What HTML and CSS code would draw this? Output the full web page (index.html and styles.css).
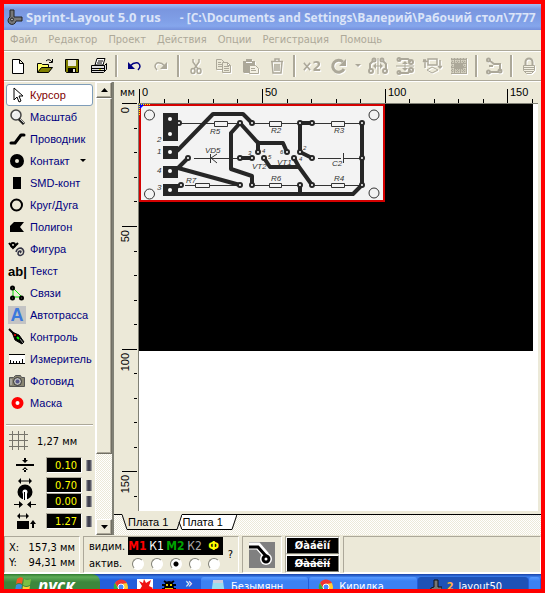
FILE: index.html
```
<!DOCTYPE html>
<html lang="ru">
<head>
    <meta charset="UTF-8">
    <meta name="viewport" content="width=device-width, initial-scale=1.0">
    <title>Sprint-Layout 5.0 rus</title>
    <link rel="stylesheet" href="styles.css">
</head>
<body>
    <header class="titlebar">
        <svg width="16" height="16" viewBox="0 0 16 16"><path d="M3 1h4v7h8v4H9a4 4 0 1 1-6-4z" fill="#777" stroke="#222"/><circle cx="5" cy="10.500" r="1.500" fill="#aaa" stroke="#222"/></svg>
        <h1>Sprint-Layout 5.0 rus</h1>
        <span class="path">- [C:\Documents and Settings\Валерий\Рабочий стол\7777</span>
    </header>
    <nav class="menubar">
        <button>Файл</button>
        <button>Редактор</button>
        <button>Проект</button>
        <button>Действия</button>
        <button>Опции</button>
        <button>Регистрация</button>
        <button>Помощь</button>
    </nav>
    <div class="toolbar">
        <button aria-label="Новый"><svg width="18" height="18" viewBox="0 0 18 18"><path d="M3.500 2.500h7l4 4v10h-11zM10.500 2.500v4h4" fill="#fff" stroke="#000"/></svg></button>
        <button aria-label="Открыть"><svg width="18" height="18" viewBox="0 0 18 18"><path d="M1.500 15.500v-9h4l1 1h6v3" fill="#ffff66" stroke="#000"/><path d="M1.500 15.500l4-5h11l-4 5z" fill="#808000" stroke="#000"/><path d="M10 4q3-3 6 1M16.500 2v3.500H13" fill="none" stroke="#000"/></svg></button>
        <button aria-label="Сохранить"><svg width="18" height="18" viewBox="0 0 18 18"><path d="M2.500 2.500h13v13h-12l-1-1z" fill="#808000" stroke="#000"/><path d="M5 3h8v6H5z" fill="#ece9d8"/><path d="M5 11h8v5H5z" fill="#000"/><path d="M10 12h2v3h-2z" fill="#ece9d8"/></svg></button>
        <button aria-label="Печать"><svg width="18" height="18" viewBox="0 0 18 18"><path d="M5 8l2-6.500h8L13 8z" fill="#fff" stroke="#000"/><path d="M8 4h5M7 6h5" stroke="#000"/><path d="M1.500 8.500h13l2-2v6l-3 3h-12z" fill="#ddd" stroke="#000"/><path d="M2 11.500h12M2 13.500h12M14.500 8.500v6" stroke="#000"/><path d="M9 12.500h2" stroke="#cc0"/></svg></button>
        <span class="sep"></span>
        <button aria-label="Отменить"><svg width="18" height="18" viewBox="0 0 18 18"><path d="M5 9q4-4 8-3 4 3 0 7" fill="none" stroke="#000080" stroke-width="1.500"/><path d="M3 5v7h7z" fill="#000080"/></svg></button>
        <button aria-label="Вернуть" disabled><svg width="18" height="18" viewBox="0 0 18 18"><path d="M13 9Q9 5 5 6q-4 3 0 7" fill="none" stroke="#aca899" stroke-width="1.500"/><path d="M15 5v7H8z" fill="#aca899"/></svg></button>
        <span class="sep"></span>
        <button aria-label="Вырезать" disabled><svg width="18" height="18" viewBox="0 0 18 18" fill="none" stroke="#aca899" stroke-width="1.500"><path d="M6 2v3l5 7M12 2v3l-5 7"/><ellipse cx="6" cy="14" rx="2" ry="2.500"/><ellipse cx="12" cy="14" rx="2" ry="2.500"/></svg></button>
        <button aria-label="Копировать" disabled><svg width="18" height="18" viewBox="0 0 18 18" fill="#ece9d8" stroke="#aca899"><path d="M2.500 2.500h5l3 3v7h-8zM4 5.500h3M4 7.500h4M4 9.500h4"/><path d="M8.500 5.500h5l3 3v7h-8zM13.500 5.500v3h3M10 9.500h5M10 11.500h5M10 13.500h5"/></svg></button>
        <button aria-label="Вставить" disabled><svg width="18" height="18" viewBox="0 0 18 18"><path d="M2 4h3V2h6v2h3v12H3l-1-1z" fill="#aca899"/><path d="M5 5.500h6" stroke="#fff"/><path d="M8.500 8.500h6l3 3v5h-9zM10 11.500h4M10 13.500h5" fill="#f4f1e4" stroke="#aca899"/></svg></button>
        <button aria-label="Удалить" disabled><svg width="18" height="18" viewBox="0 0 18 18" fill="none" stroke="#aca899" stroke-width="1.500"><path d="M3 4.500h12M7 4V2h4v2M4 5l1 11h8l1-11M7 7v7M9 7v7M11 7v7"/></svg></button>
        <span class="sep"></span>
        <button class="double" disabled>×2</button>
        <button aria-label="Повернуть" disabled><svg width="18" height="18" viewBox="0 0 18 18"><path d="M14 12a6 6 0 1 1-1-7" fill="none" stroke="#aca899" stroke-width="3"/><path d="M16 2v7H9z" fill="#aca899"/></svg></button>
        <button class="arrow" aria-label="Угол поворота" disabled><svg width="6" height="4" viewBox="0 0 6 4"><path d="M0 0h6L3 3z" fill="#aca899"/></svg></button>
        <button aria-label="Отразить по горизонтали" disabled><svg width="20" height="18" viewBox="0 0 20 18" fill="none" stroke="#aca899" stroke-width="2"><path d="M10 1v16" stroke-width="1"/><path d="M6 9h8" stroke-width="1"/><path d="M5 9l3-3v6zM15 9l-3-3v6z" fill="#aca899" stroke="none"/><path d="M5 4L2 7v6M15 4l3 3v6"/><circle cx="6" cy="3" r="1.500"/><circle cx="14" cy="3" r="1.500"/><circle cx="3" cy="14" r="2"/><circle cx="17" cy="14" r="2"/></svg></button>
        <button aria-label="Отразить по вертикали" disabled><svg width="20" height="18" viewBox="0 0 20 18" fill="none" stroke="#aca899" stroke-width="2"><path d="M1 9h18M10 6v6" stroke-width="1"/><path d="M10 4l3 3H7zM10 14l3-3H7z" fill="#aca899" stroke="none"/><path d="M4 2h9l3 3M4 16h9l3-3"/><circle cx="4" cy="2.500" r="1.500"/><circle cx="16" cy="5" r="2"/><circle cx="4" cy="15.500" r="1.500"/><circle cx="16" cy="13" r="2"/></svg></button>
        <button aria-label="Сменить сторону" disabled><svg width="20" height="18" viewBox="0 0 20 18" fill="none" stroke="#aca899" stroke-width="1.500"><path d="M6 2h9v6H6zM3 11V4M1 5l2-2 2 2M1 3h3M18 3v8M16 9l2 2 2-2"/><path d="M5 13l5-3 6 3-6 3z" stroke-width="1"/></svg></button>
        <button aria-label="Металлизация" disabled><svg width="18" height="18" viewBox="0 0 18 18"><path d="M1 1h16v16H1z" fill="#aca899"/><path d="M3 1v16M6 1v16M9 1v16M12 1v16M15 1v16M1 4h16M1 8h16M1 12h16M1 15h16" stroke="#ece9d8" stroke-dasharray="1 1"/><path d="M5 6h8v6H5z" fill="#aca899"/></svg></button>
        <span class="sep"></span>
        <button aria-label="Связи контактов" disabled><svg width="18" height="18" viewBox="0 0 18 18" fill="none" stroke="#aca899" stroke-width="2"><path d="M4 3l5 4h6v7M5 15h8M4 9h4"/><circle cx="3.500" cy="3" r="1.500"/><circle cx="3.500" cy="15" r="1.500"/><circle cx="15" cy="14" r="1.500"/></svg></button>
        <span class="sep"></span>
        <button aria-label="Закрепить" disabled><svg width="18" height="18" viewBox="0 0 18 18"><path d="M5.500 8V5a3.500 3.500 0 0 1 7 0v3" fill="none" stroke="#aca899" stroke-width="2"/><path d="M3.500 8.500h11v5l-3 3h-5l-3-3z" fill="#f4f1e4" stroke="#aca899"/><path d="M4 10.500h10M4 12.500h10M5 14.500h8" stroke="#aca899"/></svg></button>
    </div>

    <main class="workspace">
        <aside class="tools">
            <button class="tool active"><svg width="18" height="18" viewBox="0 0 18 18"><path d="M6 2v12l3-3 2 5 2-1-2-5h4z" fill="#fff" stroke="#000"/></svg>Курсор</button>
            <button class="tool"><svg width="18" height="18" viewBox="0 0 18 18"><circle cx="8" cy="7" r="5" fill="#eee" stroke="#444" stroke-width="1.500"/><path d="M5 6q1-2 3-2" stroke="#fff" fill="none"/><path d="M11 11l5 5" stroke="#222" stroke-width="3"/><path d="M12 11l4 4" stroke="#ccc"/></svg>Масштаб</button>
            <button class="tool"><svg width="18" height="18" viewBox="0 0 18 18"><path d="M3 13h4l6-8h3" fill="none" stroke="#000" stroke-width="3" stroke-linecap="round" stroke-linejoin="round"/></svg>Проводник</button>
            <button class="tool"><svg width="18" height="18" viewBox="0 0 18 18"><circle cx="9" cy="9" r="4.500" fill="#ece9d8" stroke="#000" stroke-width="5"/></svg>Контакт<svg class="drop" width="6" height="4" viewBox="0 0 6 4"><path d="M0 0h6L3 3z"/></svg></button>
            <button class="tool"><svg width="18" height="18" viewBox="0 0 18 18"><path d="M5 3h8v12H5z"/></svg>SMD-конт</button>
            <button class="tool"><svg width="18" height="18" viewBox="0 0 18 18"><circle cx="8.500" cy="9" r="5.500" fill="none" stroke="#000" stroke-width="2"/></svg>Круг/Дуга</button>
            <button class="tool"><svg width="18" height="18" viewBox="0 0 18 18"><path d="M6 4h10l-4 5 4 5H2V8z"/></svg>Полигон</button>
            <button class="tool"><svg width="18" height="18" viewBox="0 0 18 18" fill="none" stroke="#000"><path d="M1 3l4 5 5-5" stroke-width="2"/><circle cx="5" cy="5" r="2" stroke-width="2"/><path d="M12 13q2-2 0-2t-2 3q2 3 5 0 2-4-2-6-4 0-5 4" stroke="#334" stroke-width="1.500"/></svg>Фигура</button>
            <button class="tool"><span class="glyph">ab|</span>Текст</button>
            <button class="tool"><svg width="18" height="18" viewBox="0 0 18 18"><path d="M5 4v9h9L5 4" fill="none" stroke="#00e000"/><g fill="#777" stroke="#000" stroke-width="2"><circle cx="4.500" cy="4" r="1.500"/><circle cx="4.500" cy="14" r="1.500"/><circle cx="13.500" cy="14" r="1.500"/></g></svg>Связи</button>
            <button class="tool"><span class="glyph auto">A</span>Автотрасса</button>
            <button class="tool"><svg width="18" height="18" viewBox="0 0 18 18"><path d="M1 1l5 5" stroke="#000" stroke-width="2"/><path d="M4 4l7 3 5 7-2 2-7-4z" stroke="#000"/><circle cx="7" cy="7" r="1" fill="#f00"/><path d="M9 9l2 2" stroke="#0f0" stroke-width="2"/><path d="M12 11l3 4" stroke="#999"/></svg>Контроль</button>
            <button class="tool"><svg width="18" height="18" viewBox="0 0 18 18"><path d="M1 4h16v10H1z" fill="#fff"/><path d="M1 4.500h16M1 13.500h16M2.500 13v-3M5.500 13v-2M8.500 13v-2M11.500 13v-2M14.500 13V9" stroke="#000"/></svg>Измеритель</button>
            <button class="tool"><svg width="18" height="18" viewBox="0 0 18 18"><path d="M1.500 5.500h4l2-2h5l1 2h3v9h-15z" fill="#888572" stroke="#555"/><circle cx="9.500" cy="9.500" r="4" fill="#bbb" stroke="#333"/><circle cx="9.500" cy="9.500" r="2" fill="#558"/><path d="M3 7v6" stroke="#ccc"/></svg>Фотовид</button>
            <button class="tool"><svg width="18" height="18" viewBox="0 0 18 18"><circle cx="9.500" cy="9" r="4" fill="#fff" stroke="#f00" stroke-width="4"/></svg>Маска</button>
            <div class="grid-row">
                <svg width="20" height="20" viewBox="0 0 20 20"><path d="M3.500 0v19M9.500 0v19M15.500 0v19M0 3.500h19M0 9.500h19M0 15.500h19" stroke="#77756c"/></svg>
                <span>1,27 мм</span>
            </div>
            <div class="sizes">
                <div class="size">
                    <svg width="22" height="16" viewBox="0 0 22 16"><path d="M2 8h18" stroke="#000" stroke-width="2"/><path d="M8 3h6l-3 3zM8 13h6l-3-3zM10 1h2v3h-2zM10 12h2v3h-2z"/></svg>
                    <div class="fields"><div class="field"><input aria-label="Ширина проводника" value="0.10"><button class="spin" aria-label="Изменить"></button></div></div>
                </div>
                <div class="size">
                    <svg width="22" height="30" viewBox="0 0 22 30"><path d="M5 3h12" stroke="#000"/><path d="M7 0v6L4 3zM15 0v6l3-3z"/><circle cx="11" cy="14" r="5" fill="#fff" stroke="#000" stroke-width="5"/><path d="M9 14h4v8H9z" fill="#fff"/><path d="M10.500 14v8M0 26.500h5M17 26.500h5" stroke="#000"/><path d="M5 23l4 3.500L5 30zM17 23l-4 3.500 4 3.500z"/></svg>
                    <div class="fields">
                        <div class="field"><input aria-label="Внешний диаметр" value="0.70"><button class="spin" aria-label="Изменить"></button></div>
                        <div class="field"><input aria-label="Отверстие" value="0.00"><button class="spin" aria-label="Изменить"></button></div>
                    </div>
                </div>
                <div class="size">
                    <svg width="22" height="16" viewBox="0 0 22 16"><path d="M5 3h8" stroke="#000"/><path d="M6 0v6L3 3zM12 0v6l3-3zM3 8h12v8H3zM16 11l3-4 3 4zM18 10h2v5h-2z"/></svg>
                    <div class="fields"><div class="field"><input aria-label="Размер SMD" value="1.27"><button class="spin" aria-label="Изменить"></button></div></div>
                </div>
            </div>
        </aside>
        <div class="scrollbar">
            <button class="scroll-btn" aria-label="Вверх"><svg width="7" height="4" viewBox="0 0 7 4"><path d="M0 4h7L3.500 0z"/></svg></button>
            <div class="thumb"></div>
            <div class="track"></div>
            <button class="scroll-btn" aria-label="Вниз"><svg width="7" height="4" viewBox="0 0 7 4"><path d="M0 0h7L3.500 4z"/></svg></button>
        </div>

        <section class="editor">
            <div class="ruler-top">
                <span class="unit">мм</span>
                <svg class="scale" height="21">
                    <path d="M0.500 7v14M123.500 7v14M246.500 7v14M368.500 7v14M25.500 17v4M49.500 17v4M74.500 17v4M98.500 17v4M148.500 17v4M172.500 17v4M197.500 17v4M221.500 17v4M270.500 17v4M295.500 17v4M319.500 17v4M344.500 17v4M393.500 17v4" stroke="#000"/>
                    <text x="3" y="14">0</text><text x="126" y="14">50</text><text x="249" y="14">100</text><text x="371" y="14">150</text>
                </svg>
            </div>
            <div class="ruler-left">
                <svg class="scale" width="23">
                    <path d="M8 0.500h15M8 123.500h15M8 246.500h15M8 368.500h15M20 25.500h3M20 49.500h3M20 74.500h3M20 98.500h3M20 148.500h3M20 172.500h3M20 197.500h3M20 221.500h3M20 270.500h3M20 295.500h3M20 319.500h3M20 344.500h3M20 393.500h3" stroke="#000"/>
                    <g text-anchor="end"><text transform="translate(15 4) rotate(-90)">0</text><text transform="translate(15 127) rotate(-90)">50</text><text transform="translate(15 250) rotate(-90)">100</text><text transform="translate(15 372) rotate(-90)">150</text></g>
                </svg>
            </div>
            <div class="canvas">
                <svg class="sheet" width="394" height="247" viewBox="0 0 394 247">
                    <path d="M0 0h394v247H0z"/>
                    <path d="M1 1h244v96H1z" fill="#f3f3f3" stroke="#d40000" stroke-width="2"/>
                    <g stroke="#333" fill="none">
                        <path d="M40 19.500h61M113 19.500h48M173 19.500h50M55 54.500h44M179 54.500h23M205 54.500h18M46 81.500h55M113 81.500h48M173 81.500h50M71.500 50v9M78 50l-6 4 6 5M204.500 49v10"/>
                        <g fill="#f3f3f3"><path d="M75.500 17.500h13v5h-13zM130.500 17.500h12v5h-12zM192.500 17.500h13v5h-13zM56.500 79.500h14v4h-14zM130.500 79.500h12v4h-12zM192.500 79.500h13v4h-13z"/><circle cx="10.500" cy="11" r="5"/><circle cx="10.500" cy="90" r="5"/><circle cx="235" cy="11" r="5"/><circle cx="235" cy="89" r="5"/></g>
                    </g>
                    <path d="M24 9h15v28H24zM24 42h15v13H24zM24 62h15v12H24zM24 80h15v12H24z" fill="#262626"/>
                    <g fill="none" stroke="#262626" stroke-width="4" stroke-linejoin="round">
                        <path d="M38 47L74 10h30l9 9M101 19l-9 10v36l21 7v9M101 19l18 20v9M116 36l4 3h24l4 9M49 54L39 64l62 17M42 81l-9 4M30 90h184l9-9V19M161 48V19h12M161 48l12 6M125 54l6 9h29l13 18M155 54l5 9M161 81v9M101 54h12"/>
                    </g>
                    <g fill="#fff" stroke="#262626" stroke-width="2">
                        <circle cx="40" cy="19" r="2"/><circle cx="101" cy="19" r="2"/><circle cx="113" cy="19" r="2"/><circle cx="161" cy="19" r="2"/><circle cx="173" cy="19" r="2"/><circle cx="223" cy="19" r="2"/>
                        <circle cx="49" cy="54" r="2"/><circle cx="101" cy="54" r="2"/><circle cx="113" cy="54" r="2"/><circle cx="125" cy="54" r="2"/><circle cx="155" cy="54" r="2"/><circle cx="173" cy="54" r="2"/><circle cx="223" cy="54" r="2"/>
                        <circle cx="119" cy="48" r="2"/><circle cx="148" cy="48" r="2"/><circle cx="161" cy="48" r="2"/>
                        <circle cx="42" cy="81" r="2"/><circle cx="101" cy="81" r="2"/><circle cx="113" cy="81" r="2"/><circle cx="161" cy="81" r="2"/><circle cx="173" cy="81" r="2"/><circle cx="223" cy="81" r="2"/>
                    </g>
                    <g fill="#fff"><circle cx="31" cy="15" r="2"/><circle cx="31" cy="30" r="2"/><circle cx="31" cy="48" r="2"/><circle cx="31" cy="67" r="2"/><circle cx="31" cy="86" r="2"/></g>
                    <g class="parts">
                        <text x="71" y="30">R5</text><text x="132" y="29">R2</text><text x="195" y="29">R3</text>
                        <text x="66" y="49">VD5</text><text x="193" y="62">C2</text><text x="47" y="79">R7</text>
                        <text x="132" y="77">R6</text><text x="195" y="77">R4</text>
                        <text x="113" y="65">VT2</text><text x="138" y="61">VT1</text>
                        <text x="18" y="38">2</text><text x="18" y="50">1</text><text x="18" y="69">4</text><text x="18" y="86">3</text>
                    </g>
                    <g class="pins"><text x="109" y="51">3</text><text x="123" y="49">4</text><text x="129" y="55">5</text><text x="141" y="50">6</text><text x="164" y="46">2</text><text x="160" y="57">4</text></g>
                    <path d="M0 0h6L0 6z" fill="#00f"/>
                    <path d="M0 0.500h12M0.500 0v12" stroke="#ff0" stroke-dasharray="1 1"/>
                </svg>
            </div>
            <div class="tabs">
                <span class="lead"></span>
                <svg width="6" height="16" viewBox="0 0 6 16"><path d="M0 0h6v15z" fill="#ece9d8"/><path d="M0 0.500l5 15h1" fill="none" stroke="#000"/></svg>
                <button class="tab current">Плата 1</button>
                <svg width="6" height="16" viewBox="0 0 6 16"><path d="M0 0h6L0 15z" fill="#ece9d8"/><path d="M3 8l3 7V0z" fill="#fff"/><path d="M0 15.500h1l5-15M3 8l3 7.500" fill="none" stroke="#000"/></svg>
                <button class="tab">Плата 1</button>
                <svg width="6" height="16" viewBox="0 0 6 16"><path d="M0 0h6L0 15z" fill="#fff"/><path d="M0 15.500h1l5-15M0 0.500h6" fill="none" stroke="#000"/></svg>
                <span class="rest"></span>
            </div>
        </section>
    </main>

    <footer class="status">
        <div class="panel coords">
            <span>X:</span><span>157,3 мм</span>
            <span>Y:</span><span>94,31 мм</span>
        </div>
        <div class="panel layers">
            <div class="layer-grid">
                <span>видим.</span>
                <button class="m1">М1</button><button class="k1">К1</button><button class="m2">М2</button><button class="k2">К2</button><button class="f">Ф</button>
                <span>актив.</span>
                <input type="radio" name="layer" aria-label="М1"><input type="radio" name="layer" aria-label="К1"><input type="radio" name="layer" aria-label="М2" checked><input type="radio" name="layer" aria-label="К2"><input type="radio" name="layer" aria-label="Ф">
            </div>
            <button class="help">?</button>
        </div>
        <div class="panel mode">
            <svg width="26" height="26" viewBox="0 0 26 26"><path d="M0 0h26v26H0z" fill="#808080"/><path d="M0 4h9l7 8v4" fill="none" stroke="#fff" stroke-width="7"/><circle cx="17" cy="17" r="6" fill="#fff"/><path d="M0 5h9l8 9" fill="none" stroke="#000" stroke-width="3"/><circle cx="17" cy="17" r="3" fill="#fff" stroke="#000" stroke-width="3"/></svg>
        </div>
        <div class="panel marks">
            <button>Øàáëîí</button>
            <button class="struck">Øàáëîí</button>
        </div>
        <div class="panel blank"></div>
    </footer>

    <div class="taskbar">
        <button class="start"><svg width="20" height="18" viewBox="0 0 20 18"><path d="M3 4q3-3 6-1L8 9Q5 7 2 9z" fill="#f15a22"/><path d="M10 4q3 2 7 0l-1 6q-4 2-7 0z" fill="#7bc043"/><path d="M2 10q3-2 6 0l-1 6q-3-2-6 0z" fill="#3a8dde"/><path d="M9 11q3 2 7 0l-1 6q-4 2-7 0z" fill="#fc3"/></svg>пуск</button>
        <div class="quick">
            <svg width="16" height="16" viewBox="0 0 16 16"><circle cx="8" cy="8" r="7" fill="#fc3"/><path d="M2 4a7 7 0 0 1 12 0L8 5 5 9z" fill="#e33"/><path d="M2 4l4 7 1 4a7 7 0 0 1-5-11z" fill="#3a4"/><circle cx="8" cy="8" r="3" fill="#48f" stroke="#fff"/></svg>
            <svg width="16" height="16" viewBox="0 0 16 16"><path d="M0 0h16v16H0z" fill="#fff"/><path d="M2 2l4 2 1-4 2 4 5-3-2 6 4 2-6 6-8-3 3-5z" fill="#e11"/></svg>
            <svg width="16" height="16" viewBox="0 0 16 16"><path d="M3 2l3 2h4l3-2M1 6h14M1 10h14" stroke="#000" fill="none" stroke-width="2"/><ellipse cx="8" cy="9" rx="5" ry="7"/><path d="M5 5h2v2H5zM9 5h2v2H9zM4 9h8v1H4z" fill="#dc0"/></svg>
            <span>»</span>
        </div>
        <button class="task"><svg width="16" height="16" viewBox="0 0 16 16"><path d="M3 2h10l2 14H1z" fill="#9de"/><path d="M3 1h10v3H3z" fill="#ccd"/></svg>Безымянн</button>
        <button class="task"><svg width="16" height="16" viewBox="0 0 16 16"><circle cx="8" cy="8" r="7" fill="#fc3"/><path d="M2 4a7 7 0 0 1 12 0L8 5 5 9z" fill="#e33"/><path d="M2 4l4 7 1 4a7 7 0 0 1-5-11z" fill="#3a4"/><circle cx="8" cy="8" r="3" fill="#48f" stroke="#fff"/></svg>Кирилка</button>
        <button class="task pressed"><svg width="12" height="16" viewBox="0 0 12 16"><path d="M4 1h4v7h4v4H8a4 4 0 1 1-4-4z" fill="#777" stroke="#111"/></svg><b>2</b> layout50</button>
        <span class="task stub"></span>
    </div>
</body>
</html>
```
FILE: styles.css
```
* {
    box-sizing: border-box;
}
body {
    margin: 0;
    height: 100vh;
    border: 4px solid #f00;
    background: #ece9d8;
    color: #000;
    font-family: "DejaVu Sans Condensed", "DejaVu Sans", sans-serif;
    font-size: 11px;
    display: flex;
    flex-direction: column;
    overflow: hidden;
}
button {
    margin: 0;
    padding: 0;
    border: none;
    background: none;
    color: inherit;
    font: inherit;
}
svg {
    flex: none;
    display: block;
}

/* title and menu */
.titlebar {
    flex: none;
    height: 26px;
    padding: 0 3px;
    display: flex;
    align-items: center;
    gap: 3px;
    overflow: hidden;
    white-space: nowrap;
    background: linear-gradient(#a3bff2, #7a96df 20%, #7f9ee6 60%, #85a6ec 85%, #7590dc);
    color: #dbe4f8;
    font-family: "Open Sans", sans-serif;
    font-size: 12px;
    font-weight: bold;
}
.titlebar h1 {
    margin: 0;
    font-size: 13px;
}
.titlebar .path {
    margin-left: 16px;
}
.menubar {
    flex: none;
    height: 21px;
    padding: 0 1px 2px;
    display: flex;
    border-bottom: 1px solid #aca899;
}
.menubar button {
    padding: 0 6px 0 5px;
    color: #aca899;
}

/* toolbar */
.toolbar {
    flex: none;
    height: 30px;
    display: flex;
    align-items: center;
    overflow: hidden;
    border-top: 1px solid #fff;
    border-bottom: 1px solid #aca899;
}
.toolbar button {
    flex: none;
    width: 27px;
    height: 24px;
    display: flex;
    align-items: center;
    justify-content: center;
}
.toolbar button:disabled {
    color: #aca899;
    filter: drop-shadow(1px 1px 0 #fff);
}
.toolbar .arrow {
    width: 12px;
}
.toolbar .double {
    font-size: 14px;
    font-weight: bold;
}
.sep {
    flex: none;
    width: 8px;
    height: 22px;
    display: flex;
    justify-content: center;
}
.sep::before {
    content: "";
    width: 2px;
    background: #aca899;
    border-right: 1px solid #fff;
}

/* workspace */
.workspace {
    flex: 1;
    min-height: 0;
    display: flex;
    border-top: 1px solid #fff;
}
.tools {
    flex: none;
    width: 92px;
    padding: 2px 2px 0;
    overflow: hidden;
    border-right: 1px solid #fff;
}
.tool {
    width: 100%;
    height: 22px;
    padding: 0 1px;
    display: flex;
    align-items: center;
    gap: 4px;
    border: 1px solid transparent;
    border-radius: 3px;
    color: #000080;
    font-family: "Liberation Sans", sans-serif;
    font-size: 11px;
    white-space: nowrap;
}
.tool.active {
    background: #fff;
    border-color: #7f9db9;
    color: #800000;
}
.tool .drop {
    margin-left: 6px;
}
.glyph {
    flex: none;
    width: 18px;
    color: #000;
    font-size: 13px;
    font-weight: bold;
}
.glyph.auto {
    background: #c4c4c4;
    color: #3c78dc;
    font-size: 18px;
    line-height: 18px;
    text-align: center;
}
.grid-row {
    height: 33px;
    margin-top: 10px;
    padding-left: 3px;
    display: flex;
    align-items: center;
    gap: 8px;
    border-top: 1px solid #aca899;
    box-shadow: inset 0 1px #fff;
}
.sizes {
    display: flex;
    flex-direction: column;
    gap: 4px;
}
.size {
    padding: 0 1px 0 8px;
    display: flex;
    align-items: center;
}
.size svg {
    margin-right: auto;
}
.field {
    display: flex;
    align-items: center;
    gap: 4px;
}
.field input {
    width: 36px;
    height: 16px;
    padding: 0 4px 0 0;
    border: 1px solid;
    border-color: #aca899 #fff #fff #aca899;
    border-radius: 0;
    background: #000;
    color: #ff0;
    font: 11px "DejaVu Sans Condensed", "DejaVu Sans", sans-serif;
    text-align: right;
}
.spin {
    width: 6px;
    height: 11px;
    background: linear-gradient(90deg, #bbb, #223 40%, #ddd 50%, #223 60%, #bbb);
}

.scrollbar {
    flex: none;
    width: 18px;
    display: flex;
    flex-direction: column;
    border-right: 2px solid #808075;
}
.scroll-btn,
.thumb {
    background: #ece9d8;
    border: 1px solid;
    border-color: #fff #716f64 #716f64 #fff;
    box-shadow: inset -1px -1px #aca899;
}
.scroll-btn {
    flex: none;
    height: 16px;
    display: flex;
    align-items: center;
    justify-content: center;
}
.thumb {
    flex: 355;
}
.track {
    flex: 65;
}
.track,
.tabs {
    background: repeating-conic-gradient(#fff 0 25%, #ece9d8 0 50%) 0 0 / 2px 2px;
}

/* editor */
.editor {
    flex: 1;
    min-width: 0;
    display: grid;
    grid-template-columns: 24px 1fr;
    grid-template-rows: 21px 1fr 21px;
}
.ruler-top {
    grid-column: 1 / 3;
    display: flex;
    overflow: hidden;
}
.unit {
    flex: none;
    width: 25px;
    padding: 4px 0 0 6px;
}
.scale {
    flex: 1;
    min-width: 0;
    font-family: "Liberation Sans", sans-serif;
    font-size: 11px;
}
.ruler-left {
    min-height: 0;
    overflow: hidden;
}
.ruler-left .scale {
    height: 100%;
}
.canvas {
    min-width: 0;
    min-height: 0;
    margin: 0 3px 3px 0;
    overflow: hidden;
    background: #fff;
    border: solid #808075;
    border-width: 1px 0 0 1px;
}
.parts,
.pins {
    fill: #333;
    font-family: "Liberation Sans", sans-serif;
    font-size: 8px;
    font-style: italic;
}
.pins {
    font-size: 6px;
}
.tabs {
    grid-column: 1 / 3;
    display: flex;
    align-items: flex-start;
}
.tab {
    height: 16px;
    padding: 0 8px 0 0;
    background: #fff;
    border: solid #000;
    border-width: 1px 0;
    font-family: "Liberation Sans", sans-serif;
    line-height: 14px;
}
.tab.current {
    background: #ece9d8;
    border-top-color: #ece9d8;
}
.lead {
    width: 8px;
    border-top: 1px solid #000;
}
.rest {
    flex: 1;
    border-top: 1px solid #000;
}

/* status bar */
.status {
    flex: none;
    height: 39px;
    display: flex;
    gap: 3px;
    border-bottom: 1px solid #fff;
}
.panel {
    flex: none;
    margin-top: 1px;
    border: 1px solid;
    border-color: #aca899 #fff #fff #aca899;
    display: flex;
    align-items: center;
}
.coords {
    width: 76px;
    padding: 0 4px;
    display: grid;
    grid-template-columns: 14px 1fr;
    align-content: center;
    line-height: 15px;
}
.coords span:nth-child(even) {
    text-align: right;
}
.layers {
    width: 156px;
    padding-left: 5px;
}
.layer-grid {
    display: grid;
    grid-template-columns: 39px repeat(5, 19px);
    grid-template-rows: 18px 17px;
    align-items: center;
}
.layer-grid button {
    height: 18px;
    background: #000;
    font-size: 12px;
    font-weight: bold;
}
.layer-grid .m1 { color: #f00; }
.layer-grid .k1 { color: #fff; font-weight: normal; }
.layer-grid .m2 { color: #00a000; }
.layer-grid .k2 { color: #aaa; font-weight: normal; }
.layer-grid .f { color: #ff0; }
.layer-grid input {
    appearance: none;
    width: 12px;
    height: 12px;
    margin: 0 auto;
    border: 1px solid;
    border-color: #808075 #fff #fff #808075;
    border-radius: 50%;
    background: #fff;
}
.layer-grid input:checked {
    background: radial-gradient(#000 0 2px, #fff 3px);
}
.help {
    margin: 0 auto;
}
.mode {
    width: 40px;
    justify-content: center;
}
.marks {
    width: 55px;
    flex-direction: column;
    justify-content: space-around;
}
.marks button {
    width: 53px;
    height: 17px;
    border: 1px solid;
    border-color: #fff #808075 #808075 #fff;
    background: #000;
    color: #fff;
    font-weight: bold;
    line-height: 15px;
}
.marks .struck {
    text-decoration: line-through;
}
.blank {
    flex: 1;
}

/* taskbar */
.taskbar {
    flex: none;
    height: 15px;
    display: flex;
    align-items: flex-start;
    overflow: hidden;
    background: linear-gradient(#1941a5, #3c81f0 3px, #245edb 6px);
    color: #fff;
    white-space: nowrap;
}
.start {
    flex: none;
    width: 96px;
    height: 30px;
    padding: 1px 0 0 10px;
    display: flex;
    gap: 4px;
    border-radius: 0 8px 8px 0;
    background: linear-gradient(#2f7a2f, #5eac56 3px, #3c873c 8px);
    font-family: "Open Sans", sans-serif;
    font-size: 17px;
    font-style: italic;
    font-weight: bold;
    line-height: 22px;
}
.quick {
    flex: none;
    width: 101px;
    padding: 5px 0 0 13px;
    display: flex;
    gap: 8px;
}
.quick span {
    font-size: 14px;
    line-height: 9px;
}
.task {
    flex: 1;
    height: 25px;
    margin: 3px 1px 0 0;
    padding: 2px 0 0 9px;
    display: flex;
    gap: 5px;
    border-radius: 3px;
    background: linear-gradient(#5a9bff, #3c81f3 4px);
    line-height: 16px;
}
.task.pressed {
    padding-left: 12px;
    background: #1e52b7;
}
.task b {
    color: #ffb347;
}
.task.stub {
    flex: none;
    width: 11px;
    padding: 0;
}
```
